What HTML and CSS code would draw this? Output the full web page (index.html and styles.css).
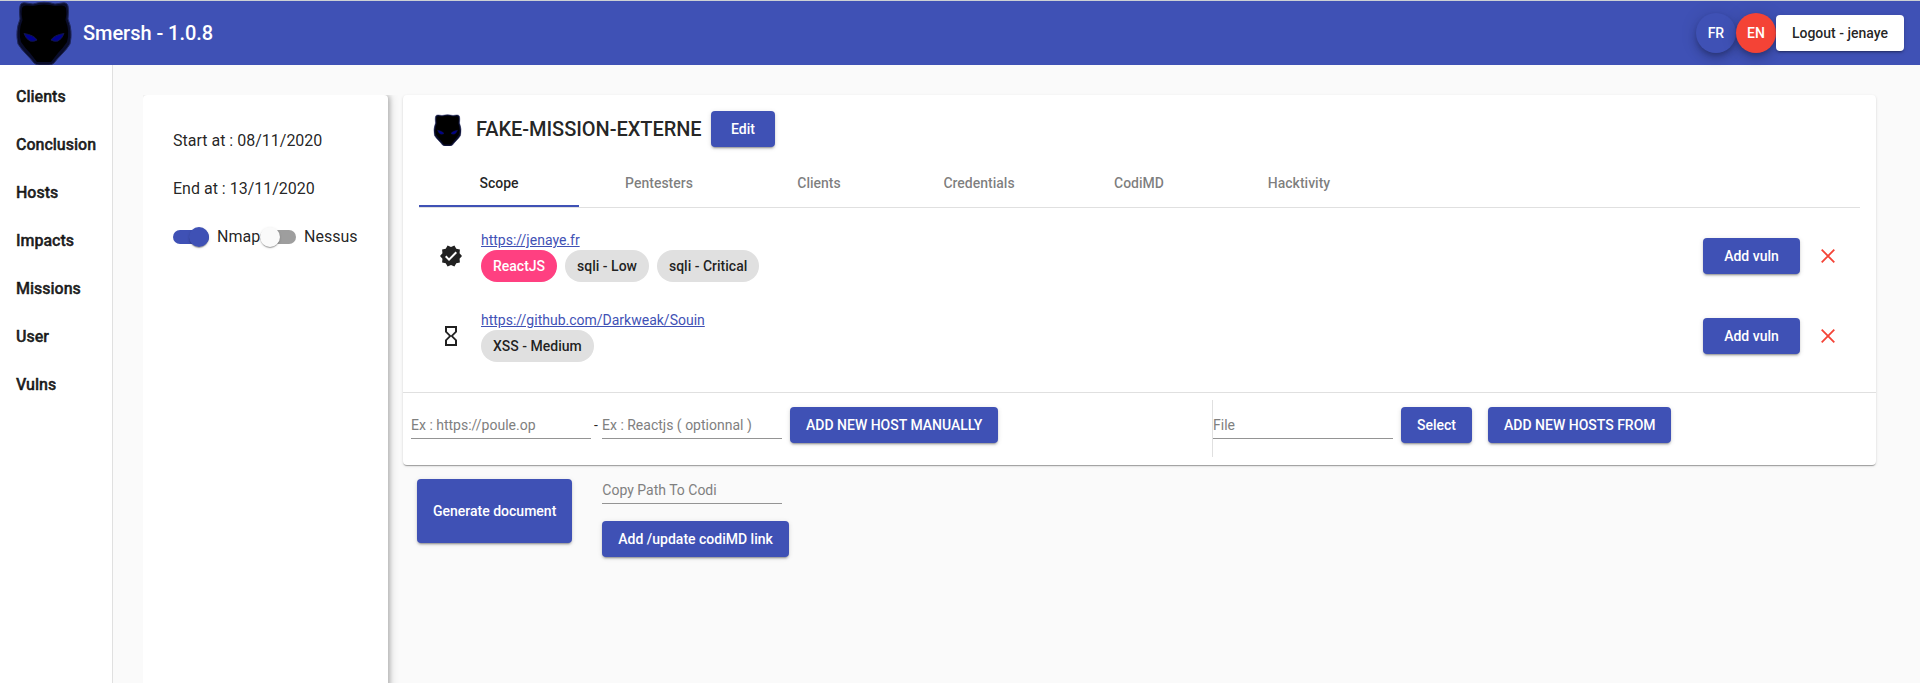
FILE: index.html
```html
<!DOCTYPE html>
<html lang="en">
<head>
<meta charset="utf-8">
<title>Smersh</title>
<link rel="stylesheet" href="styles.css">
</head>
<body>
<svg class="defs" width="0" height="0">
  <symbol id="panther" viewBox="0 0 56 64">
    <path d="M4 5Q5 1 10 2L17 3Q28-.5 39 3L46 2Q51 1 52 5Q53 9 52 18Q57 30 54 43Q51 48 46 53Q41 58 38 62Q36 64 33 64H23Q20 64 18 62Q15 58 10 53Q5 48 2 43Q-1 30 4 18Q3 9 4 5Z" fill="#0a0d2b" stroke="#20285d" stroke-width="1"/>
    <path d="M6 7Q7 4 11 4.500L17 5Q28 2 39 5L45 4.500Q49 4 50 7Q51 12 49.500 19Q54 30 51 41Q47 47 42 52L35 61H21L14 52Q9 47 5 41Q2 30 6.500 19Q5 12 6 7Z" fill="#000"/>
    <path d="M8 32.500Q18 34 21 39Q18 41 14 40Q10 38 8 32.500ZM48 32.500Q38 34 35 39Q38 41 42 40Q46 38 48 32.500Z" fill="#00008c" stroke="#11164a" stroke-width="1"/>
  </symbol>
  <symbol id="cross" viewBox="0 0 14 14"><path d="M.7.7l12.600 12.600M13.300.7L.7 13.300" fill="none" stroke="#f44336" stroke-width="1.800"/></symbol>
</svg>
<header class="toolbar">
  <svg class="logo"><use href="#panther"/></svg>
  <span class="brand">Smersh - 1.0.8</span>
  <button class="fab">FR</button><button class="fab warn">EN</button><button class="btn plain">Logout - jenaye</button>
</header>
<div class="shell">
  <nav class="sidenav">
    <a>Clients</a><a>Conclusion</a><a>Hosts</a><a>Impacts</a><a>Missions</a><a>User</a><a>Vulns</a>
  </nav>
  <main class="content">
    <div class="aside-clip">
      <aside class="card info">
        <p>Start at : 08/11/2020</p>
        <p>End at : 13/11/2020</p>
        <div class="toggles">
          <span class="switch on"><i></i></span><span class="label nmap">Nmap</span>
          <span class="switch"><i></i></span><span class="label">Nessus</span>
        </div>
      </aside>
    </div>
    <div class="mission">
      <section class="card main-card">
        <div class="title-row">
          <svg class="avatar"><use href="#panther"/></svg>
          <h1>FAKE-MISSION-EXTERNE</h1>
          <button class="btn edit">Edit</button>
        </div>
        <div class="tabs">
          <span class="tab active">Scope</span><span class="tab">Pentesters</span><span class="tab">Clients</span><span class="tab">Credentials</span><span class="tab">CodiMD</span><span class="tab">Hacktivity</span>
        </div>
        <div class="hosts">
          <div class="host">
            <svg class="state" viewBox="0 0 24 24"><path fill="#212121" d="M23 12l-2.440-2.780.34-3.680-3.610-.82-1.890-3.180L12 3 8.600 1.540 6.710 4.720l-3.610.81.34 3.680L1 12l2.440 2.780-.34 3.690 3.610.82 1.890 3.180L12 21l3.400 1.460 1.890-3.180 3.610-.82-.34-3.680L23 12zm-13 5l-4-4 1.410-1.410L10 14.170l6.590-6.590L18 9l-8 8z"/></svg>
            <div class="host-info">
              <a class="link">https://jenaye.fr</a>
              <div class="chips"><span class="chip accent">ReactJS</span><span class="chip">sqli - Low</span><span class="chip">sqli - Critical</span></div>
            </div>
            <button class="btn vuln">Add vuln</button>
            <svg class="remove"><use href="#cross"/></svg>
          </div>
          <div class="host">
            <svg class="state" viewBox="0 0 24 24"><path fill="#212121" d="M6 2v6h.01L6 8.010 10 12l-4 4 .01.01H6V22h12v-5.990h-.01L18 16l-4-4 4-3.990-.01-.01H18V2H6zm10 14.500V20H8v-3.500l4-4 4 4zm-4-5l-4-4V4h8v3.500l-4 4z"/></svg>
            <div class="host-info">
              <a class="link">https://github.com/Darkweak/Souin</a>
              <div class="chips"><span class="chip">XSS - Medium</span></div>
            </div>
            <button class="btn vuln">Add vuln</button>
            <svg class="remove"><use href="#cross"/></svg>
          </div>
        </div>
        <div class="forms">
          <div class="manual">
            <input class="field" placeholder="Ex : https://poule.op">
            <span class="dash">-</span>
            <input class="field" placeholder="Ex : Reactjs ( optionnal )">
            <button class="btn add">ADD NEW HOST MANUALLY</button>
          </div>
          <div class="from-file">
            <input class="field" placeholder="File">
            <button class="btn select">Select</button>
            <button class="btn from">ADD NEW HOSTS FROM</button>
          </div>
        </div>
      </section>
      <div class="actions">
        <button class="btn generate">Generate document</button>
        <div class="codi">
          <input class="field" placeholder="Copy Path To Codi">
          <button class="btn">Add /update codiMD link</button>
        </div>
      </div>
    </div>
  </main>
</div>
</body>
</html>
```
FILE: styles.css
```css
* { box-sizing: border-box; }
body {
  margin: 0;
  height: 683px;
  overflow: hidden;
  display: flex;
  flex-direction: column;
  background: #fafafa;
  border-top: 1px solid #ccd0d4;
  font: 400 14px/20px Roboto, sans-serif;
  color: rgba(0, 0, 0, .87);
}
.defs { position: absolute; }
button, input { font-family: inherit; }
svg { flex: none; }

.toolbar {
  flex: none;
  height: 64px;
  display: flex;
  align-items: center;
  padding: 0 16px;
  background: #3f51b5;
  color: #fff;
}
.logo { width: 56px; height: 64px; }
.brand { flex: 1; margin-left: 11px; font: 500 20px/32px Roboto, sans-serif; letter-spacing: -.04px; }
.fab {
  width: 40px;
  height: 40px;
  padding: 0;
  border: 0;
  border-radius: 50%;
  background: #3f51b5;
  color: #fff;
  font-size: 14px;
  font-weight: 500;
  box-shadow: 0 3px 5px -1px rgba(0,0,0,.2), 0 6px 10px 0 rgba(0,0,0,.14), 0 1px 18px 0 rgba(0,0,0,.12);
}
.fab.warn { background: #f44336; }

.btn {
  flex: none;
  height: 36px;
  padding: 0 16px;
  border: 0;
  border-radius: 4px;
  background: #3f51b5;
  color: #fff;
  font-size: 14px;
  font-weight: 500;
  line-height: 36px;
  white-space: nowrap;
  box-shadow: 0 3px 1px -2px rgba(0,0,0,.2), 0 2px 2px 0 rgba(0,0,0,.14), 0 1px 5px 0 rgba(0,0,0,.12);
}
.btn.plain { background: #fff; color: rgba(0,0,0,.87); }

.shell { flex: 1; min-height: 0; display: flex; }
.sidenav {
  width: 113px;
  background: #fff;
  border-right: 1px solid #e0e0e0;
  padding: 8px 16px;
  display: flex;
  flex-direction: column;
}
.sidenav a { height: 48px; font: 500 16px/48px Roboto, sans-serif; -webkit-text-stroke: .4px; }

.content { flex: 1; display: flex; padding: 30px 44px 0 30px; }
.aside-clip { width: 260px; overflow: hidden; }
.card {
  background: #fff;
  border-radius: 4px;
}
.info {
  width: 245px;
  height: 640px;
  padding: 34px 30px;
  font-size: 16px;
  line-height: 24px;
  box-shadow: 2px 0 4px rgba(0,0,0,.2), 3px 0 10px rgba(0,0,0,.12);
}
.info p { margin: 0 0 24px; }
.toggles { display: flex; align-items: center; height: 24px; }
.switch { width: 36px; height: 14px; border-radius: 8px; background: #9e9e9e; display: flex; align-items: center; }
.switch i {
  flex: none;
  width: 20px;
  height: 20px;
  border-radius: 50%;
  background: #fafafa;
  box-shadow: 0 2px 1px -1px rgba(0,0,0,.2), 0 1px 1px 0 rgba(0,0,0,.14), 0 1px 3px 0 rgba(0,0,0,.12);
}
.switch.on { justify-content: flex-end; background: #3f51b5; }
.switch.on i { background: #3f51b5; }
.label { margin-left: 8px; }
.nmap { width: 43px; }

.mission { flex: 1; min-width: 0; }
.main-card {
  height: 370px;
  box-shadow: 0 2px 1px -1px rgba(0,0,0,.2), 0 1px 1px 0 rgba(0,0,0,.14), 0 1px 3px 0 rgba(0,0,0,.12);
}
.title-row { display: flex; align-items: center; height: 64px; padding: 4px 30px 0; }
.avatar { width: 29px; height: 32px; margin-top: 2px; }
h1 { margin: 0 9px 0 14px; width: 226px; white-space: nowrap; font: 500 20px/32px Roboto, sans-serif; letter-spacing: -.05px; }
.title-row .edit { width: 64px; }

.tabs { display: flex; height: 49px; margin: 0 16px; border-bottom: 1px solid #e0e0e0; }
.tab { width: 160px; text-align: center; font-weight: 500; line-height: 48px; color: rgba(0,0,0,.52); }
.tab.active { color: rgba(0,0,0,.87); border-bottom: 2px solid #3f51b5; }

.hosts { height: 184px; padding: 8px 16px; }
.host { display: flex; align-items: center; height: 80px; padding: 0 25px 0 20px; }
.state { width: 24px; height: 24px; }
.host-info { flex: 1; margin-left: 18px; height: 54px; }
.link { display: block; height: 21px; line-height: 22px; color: #3f51b5; text-decoration: underline; }
.chips { display: flex; gap: 8px; }
.chip { height: 32px; padding: 0 12px; border-radius: 16px; background: #e0e0e0; font-weight: 500; line-height: 32px; }
.chip.accent { background: #ff4081; color: #fff; }
.vuln { width: 97px; }
.remove { width: 14px; height: 14px; margin-left: 21px; }

.forms { display: flex; height: 73px; border-top: 1px solid #e0e0e0; }
.manual { width: 809px; display: flex; padding: 14px 0 0 8px; }
.from-file { display: flex; height: 57px; margin-top: 7px; padding-top: 7px; border-left: 1px solid #e0e0e0; }
.field {
  width: 180px;
  height: 32px;
  padding: 8px 0 3px;
  border: 0;
  border-bottom: 1px solid #949494;
  background: transparent;
  font-size: 14px;
  line-height: 20px;
}
.field::placeholder { color: #808080; opacity: 1; }
.dash { width: 11px; padding-left: 3px; line-height: 36px; }
.add, .select { margin-left: 8px; }
.select { margin-right: 16px; }
.from { width: 183px; }

.actions { display: flex; padding: 14px 0 0 14px; }
.generate { height: 64px; }
.codi { display: flex; flex-direction: column; align-items: flex-start; margin: -7px 0 0 30px; gap: 17px; }
```
